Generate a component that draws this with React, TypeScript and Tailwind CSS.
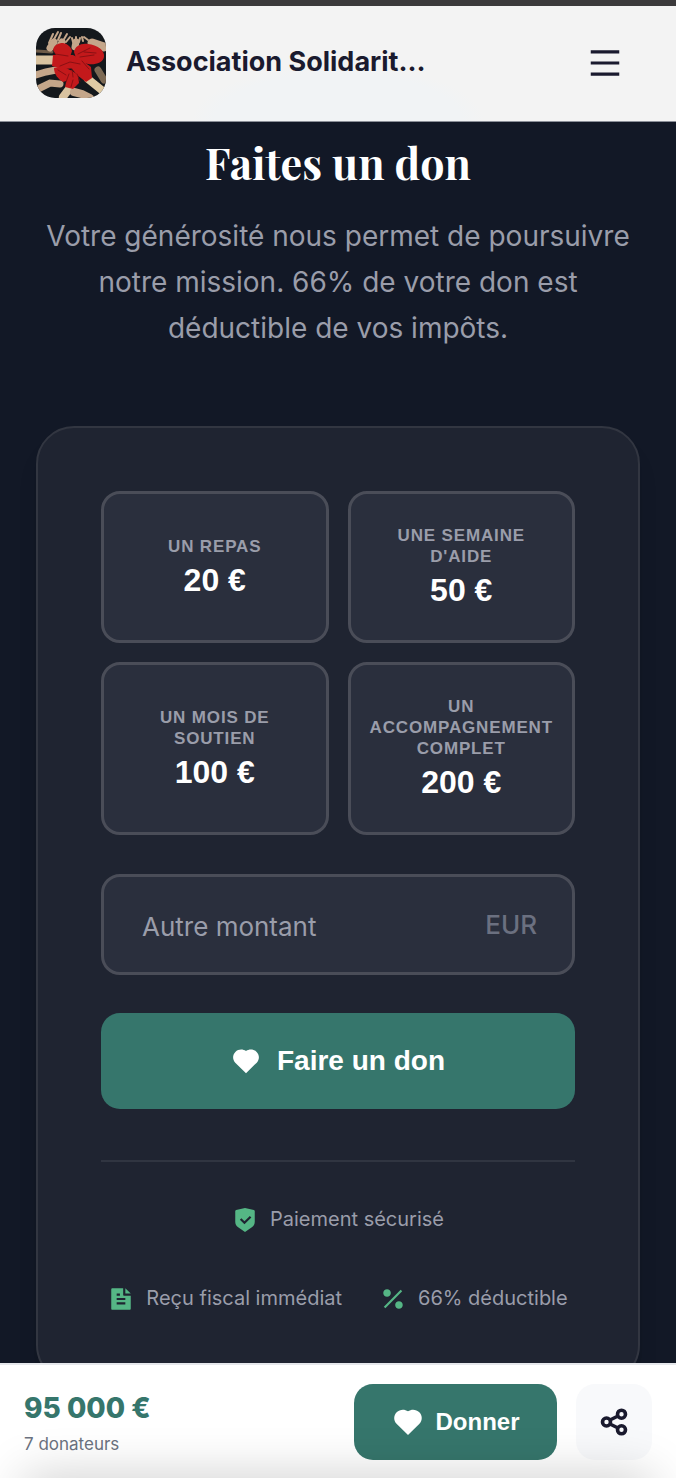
import { useState } from 'react';
import { RiFileTextFill, RiMenuLine, RiPercentFill, RiShieldCheckFill } from 'react-icons/ri';

const PRESETS = [
  { amount: 20, label: 'Un repas' },
  { amount: 50, label: "Une semaine d'aide" },
  { amount: 100, label: 'Un mois de soutien' },
  { amount: 200, label: 'Un accompagnement complet' },
];

const TRUST = [
  { icon: RiShieldCheckFill, text: 'Paiement sécurisé' },
  { icon: RiFileTextFill, text: 'Reçu fiscal immédiat' },
  { icon: RiPercentFill, text: '66% déductible' },
];

export default function App() {
  const [selected, setSelected] = useState<number | null>(null);
  const [custom, setCustom] = useState('');

  return (
    <div className="flex h-screen flex-col bg-[#121826] font-['Inter',sans-serif]">
      <Header />

      <main className="min-h-0 flex-1 overflow-y-auto px-9 pt-3 [scrollbar-width:none]">
        <h1 className="text-center font-['Playfair_Display','Liberation_Serif',serif] text-[43px] leading-[56px] font-bold text-white">
          Faites un don
        </h1>
        <p className="mt-[23px] text-center text-[28px] leading-[46px] text-[#9a9daa]">
          Votre générosité nous permet de poursuivre notre mission. 66% de votre don est
          déductible de vos impôts.
        </p>

        <form
          className="mt-[75px] rounded-[38px] border-2 border-[#323641] bg-[#1f2431] px-[63px] pt-[63px] pb-[62px] shadow-xl"
          onSubmit={(e) => e.preventDefault()}
        >
          <div className="grid grid-cols-2 gap-[19px]">
            {PRESETS.map((p) => (
              <PresetButton
                key={p.amount}
                {...p}
                active={selected === p.amount}
                onClick={() => setSelected(p.amount)}
              />
            ))}
          </div>

          <div className="mt-[39px] flex h-[101px] items-center rounded-[19px] border-3 border-[#4a4d58] bg-[#2a2f3d] pr-[35px] pl-[38px]">
            <input
              className="min-w-0 flex-1 pt-1 text-[26px] text-white outline-none placeholder:text-[#9a9daa]"
              aria-label="Autre montant"
              placeholder="Autre montant"
              inputMode="numeric"
              value={custom}
              onChange={(e) => {
                setCustom(e.target.value);
                setSelected(null);
              }}
            />
            <span className="text-[26px] font-medium text-[#6b7080]">EUR</span>
          </div>

          <button
            type="submit"
            className="mt-[38px] flex h-24 w-full items-center justify-center gap-4 rounded-[19px] bg-[#36766c] font-['Liberation_Sans',sans-serif] text-[28px] font-bold text-white"
          >
            <Heart className="size-[30px]" />
            Faire un don
          </button>

          <ul className="mt-[51px] flex flex-wrap justify-center gap-[38px] border-t-2 border-[#303541] pt-[37px]">
            {TRUST.map(({ icon: Icon, text }) => (
              <li key={text} className="flex items-center gap-3 text-[20px] leading-[41px] text-[#9a9daa]">
                <Icon className="size-[26px] text-[#55b685]" />
                {text}
              </li>
            ))}
          </ul>
        </form>
      </main>

      <BottomBar />
    </div>
  );
}

function Header() {
  return (
    <header className="flex h-[122px] shrink-0 items-center justify-between gap-5 border-t-6 border-b border-t-[#3b3a3b] border-b-[#8b8f98] bg-[#f3f3f3] bg-[radial-gradient(ellipse_146px_56px_at_50%_100%,#f1f3f5_85%,#f3f3f3)] px-9 pb-0.5">
      <a href="#" className="flex min-w-0 items-center gap-5 text-[#1a1a2e]">
        <Logo />
        <span className="text-[27px] font-bold whitespace-nowrap">Association Solidarit…</span>
      </a>
      <button className="mr-4 text-[#1a1a2e]" aria-label="Menu">
        <RiMenuLine className="size-[38px]" />
      </button>
    </header>
  );
}

function PresetButton(props: {
  amount: number;
  label: string;
  active: boolean;
  onClick: () => void;
}) {
  return (
    <button
      type="button"
      aria-pressed={props.active}
      onClick={props.onClick}
      className={`flex flex-col items-center justify-center gap-[5px] rounded-[19px] border-3 bg-[#2a2f3d] px-4 py-[31px] font-['Liberation_Sans',sans-serif] font-bold ${
        props.active ? 'border-[#36766c]' : 'border-[#4a4d58]'
      }`}
    >
      <span className="text-[17px] leading-[21px] tracking-wider text-[#9a9daa] uppercase">
        {props.label}
      </span>
      <span className="text-[32px] leading-[37px] text-white">{props.amount} €</span>
    </button>
  );
}

function BottomBar() {
  return (
    <footer className="relative flex h-[115px] shrink-0 items-center gap-[19px] overflow-hidden border-t-2 border-[#e5e7eb] bg-white px-6">
      <div className="flex-1 pt-2">
        <p className="text-[28px] leading-[36px] font-extrabold text-[#36766c]">95 000 €</p>
        <p className="text-[17px] leading-[36px] text-[#6b7280]">7 donateurs</p>
      </div>
      <button className="flex h-[76px] w-[203px] items-center justify-center gap-3 rounded-[19px] bg-[#36766c] font-['Liberation_Sans',sans-serif] text-[24px] font-bold text-white">
        <Heart className="size-8" />
        Donner
      </button>
      <button
        className="flex size-[76px] items-center justify-center rounded-[19px] bg-[#f8f9fb] text-[#1a1a2e]"
        aria-label="Partager"
      >
        <Share className="size-[30px]" />
      </button>
      {/* soft shade rising from the bottom edge */}
      <div className="pointer-events-none absolute inset-x-6 top-full h-10 shadow-[0_0_50px_rgba(0,0,0,0.22)]" />
    </footer>
  );
}

/* ------- icons ------- */

function Heart({ className }: { className?: string }) {
  return (
    <svg viewBox="0 0 24 24" fill="currentColor" className={className} aria-hidden="true">
      <path d="M12 4c2.6-1.8 6.2-1.6 8.5.7 2.4 2.4 2.4 6.2.1 8.6L12 21.8l-8.6-8.5C1.1 10.900 1.1 7.100 3.5 4.700 5.800 2.400 9.400 2.200 12 4z" />
    </svg>
  );
}

function Share({ className }: { className?: string }) {
  return (
    <svg
      viewBox="0 0 30 30"
      fill="none"
      stroke="currentColor"
      strokeWidth="3.6"
      className={className}
      aria-hidden="true"
    >
      <circle cx="22.5" cy="7.2" r="4" />
      <circle cx="22.5" cy="22.8" r="4" />
      <circle cx="7.5" cy="15" r="4" />
      <path d="M11 13l8-4M11 17l8 4" />
    </svg>
  );
}

// Hands reaching in around a heart painted across the palms
function Logo() {
  return (
    <svg viewBox="0 0 70 70" className="size-[70px] shrink-0 rounded-[19px] bg-[#14181c]" aria-hidden="true">
      <g stroke="#c4a68a" strokeLinecap="round" fill="none">
        <path d="M0 32h22" stroke="#d9c3a0" strokeWidth="9" />
        <path d="M0 23l16 1" stroke="#6e5b48" strokeWidth="3" />
        <path d="M0 47l10-3 10-2M4 60l10-5 10 1" strokeWidth="7" />
        <path d="M27 69l6-8" stroke="#d9c3a0" strokeWidth="8" />
        <path d="M38 64l8 2 8 4" strokeWidth="8" />
        <path d="M68 64L52 51" stroke="#e0cba4" strokeWidth="8" />
        <path d="M68 52l-6-10" stroke="#7d6a54" strokeWidth="7" />
        <path d="M68 19l-12-4" strokeWidth="9" />
        <path d="M14 20l4-6M24 18l2-4M39 19l1-5" strokeWidth="7" />
        <path d="M13 15l4-9M17 13l5-9M22 12l3-7M27 13l4-7M30 14l4-5M37 14l-1-4M40 13v-4M43 14l1-4M47 13l-1-4M52 12l-4-3" strokeWidth="2" />
      </g>
      <g fill="#c3191b">
        <path d="M17 22c1-5 5-7 10-7 5 1 8 4 9 8l-2 6-14-2z" />
        <path d="M17 27l20 0 8 4-4 9-13 1-12-3z" />
        <path d="M38 24c1-6 7-9 14-8 9 1 17 6 16 13-1 6-9 8-16 7l-11-3z" />
        <path d="M18 40l8-2 10 5-3 9-6 2c-5-3-9-8-9-14z" />
        <path d="M32 36l12-5 11 8 1 11-6 4-9-7z" />
        <path d="M35 42l7 5 1 8-6 6-8-2 2-9z" />
      </g>
      <g stroke="#7b0e12" strokeWidth="0.8" fill="none" strokeLinecap="round">
        <path d="M19 26l13 2M24 38l10-4 10 2M42 26l12-6M44 29l14-2M46 33l7 8M36 41l1 8M33 46l-3 8M41 46l3 7M37 52l-2 7M22 42l8 5M48 24l12 1" />
      </g>
    </svg>
  );
}
